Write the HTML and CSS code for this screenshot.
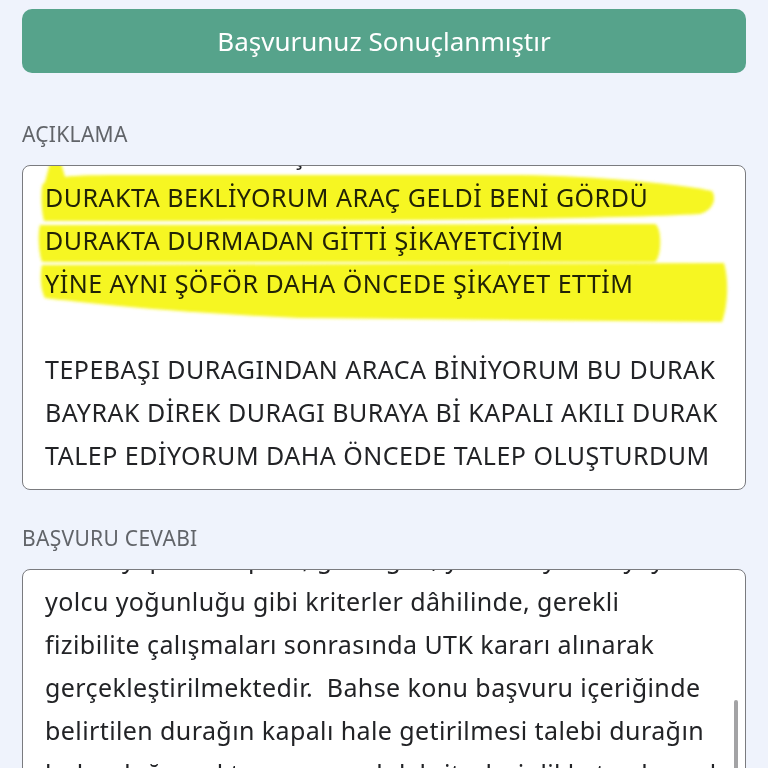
FILE: index.html
```html
<!DOCTYPE html>
<html lang="tr">
<head>
<meta charset="utf-8">
<title>Başvuru</title>
<link rel="stylesheet" href="styles.css">
</head>
<body>
<div class="page">
  <div class="status-btn">Başvurunuz Sonuçlanmıştır</div>

  <section class="field field-first">
    <div class="field-label">AÇIKLAMA</div>
    <div class="textbox textbox-desc">
      <div class="scroll upper">
        <div class="line">DÜN DE O AYNI ARAÇ</div>
        <div class="line">DURAKTA BEKLİYORUM ARAÇ GELDİ BENİ GÖRDÜ</div>
        <div class="line">DURAKTA DURMADAN GİTTİ ŞİKAYETCİYİM</div>
        <div class="line">YİNE AYNI ŞÖFÖR DAHA ÖNCEDE ŞİKAYET ETTİM</div>
        <div class="line">&nbsp;</div>
        <div class="line">TEPEBAŞI DURAGINDAN ARACA BİNİYORUM BU DURAK</div>
        <div class="line">BAYRAK DİREK DURAGI BURAYA Bİ KAPALI AKILI DURAK</div>
        <div class="line">TALEP EDİYORUM DAHA ÖNCEDE TALEP OLUŞTURDUM</div>
      </div>
      <svg class="highlight" viewBox="22 165 724 325" width="724" height="325" aria-hidden="true">
        <defs>
          <filter id="soft" x="-5%" y="-20%" width="110%" height="140%">
            <feGaussianBlur stdDeviation="1.6"/>
          </filter>
        </defs>
        <g fill="#f6f622" filter="url(#soft)">
          <path d="M50,163 L61,163 L66,180 L44,186 Z"/>
          <path d="M42,186 C45,178 60,175 120,175 L520,175 C600,176 680,184 712,191 C717,199 713,210 700,214 C600,220 300,221 120,221 L44,221 C41,210 41,195 42,186 Z"/>
          <path d="M40,225 L655,224 C662,227 662,256 655,262 L42,262 C38,250 38,233 40,225 Z"/>
          <path d="M42,265 L724,263 C729,280 728,305 722,322 L300,318 C200,314 100,305 45,298 C40,290 40,272 42,265 Z"/>
        </g>
      </svg>
    </div>
  </section>

  <section class="field field-second">
    <div class="field-label">BAŞVURU CEVABI</div>
    <div class="textbox textbox-reply">
      <div class="scroll lower">
        <div class="line">durak yapım talepleri; güzergah, yolcu sayısı ve yaya</div>
        <div class="line">yolcu yoğunluğu gibi kriterler dâhilinde, gerekli</div>
        <div class="line">fizibilite çalışmaları sonrasında UTK kararı alınarak</div>
        <div class="line">gerçekleştirilmektedir.  Bahse konu başvuru içeriğinde</div>
        <div class="line">belirtilen durağın kapalı hale getirilmesi talebi durağın</div>
        <div class="line">bulunduğu noktanın uygunluk kriterleri dikkate alınarak</div>
      </div>
      <div class="scrollbar"></div>
    </div>
  </section>
</div>
</body>
</html>
```

FILE: styles.css
```css
html, body {
  margin: 0;
  padding: 0;
}

body {
  width: 768px;
  height: 768px;
  overflow: hidden;
  background: #eff3fc;
  font-family: "Noto Sans", "Open Sans", "DejaVu Sans", sans-serif;
  color: #222326;
}

.page {
  padding: 9px 22px 0;
}

.status-btn {
  height: 64px;
  border-radius: 10px;
  background: #56a38b;
  color: #ffffff;
  font-size: 26px;
  display: flex;
  align-items: center;
  justify-content: center;
}

.field-first {
  margin-top: 49px;
}

.field-second {
  margin-top: 36px;
}

.field-label {
  font-size: 21px;
  line-height: 24px;
  letter-spacing: 0.3px;
  color: #616469;
  margin-bottom: 19px;
}

.textbox {
  position: relative;
  box-sizing: border-box;
  background: #ffffff;
  border: 1.5px solid #7a7b7f;
  border-radius: 8px;
  overflow: hidden;
}

.textbox-desc {
  height: 325px;
}

.textbox-reply {
  height: 260px;
}

.scroll {
  margin-top: -33px;
  padding: 0 22px;
  font-size: 25px;
  line-height: 43px;
}

.upper {
  letter-spacing: 0.5px;
}

.lower {
  letter-spacing: 0.4px;
}

.line {
  white-space: pre;
}

.highlight {
  position: absolute;
  left: -1.5px;
  top: -1.5px;
  mix-blend-mode: multiply;
  pointer-events: none;
}

.scrollbar {
  position: absolute;
  right: 7px;
  top: 130px;
  width: 4px;
  height: 140px;
  border-radius: 2px;
  background: #a3a3a5;
}
```
